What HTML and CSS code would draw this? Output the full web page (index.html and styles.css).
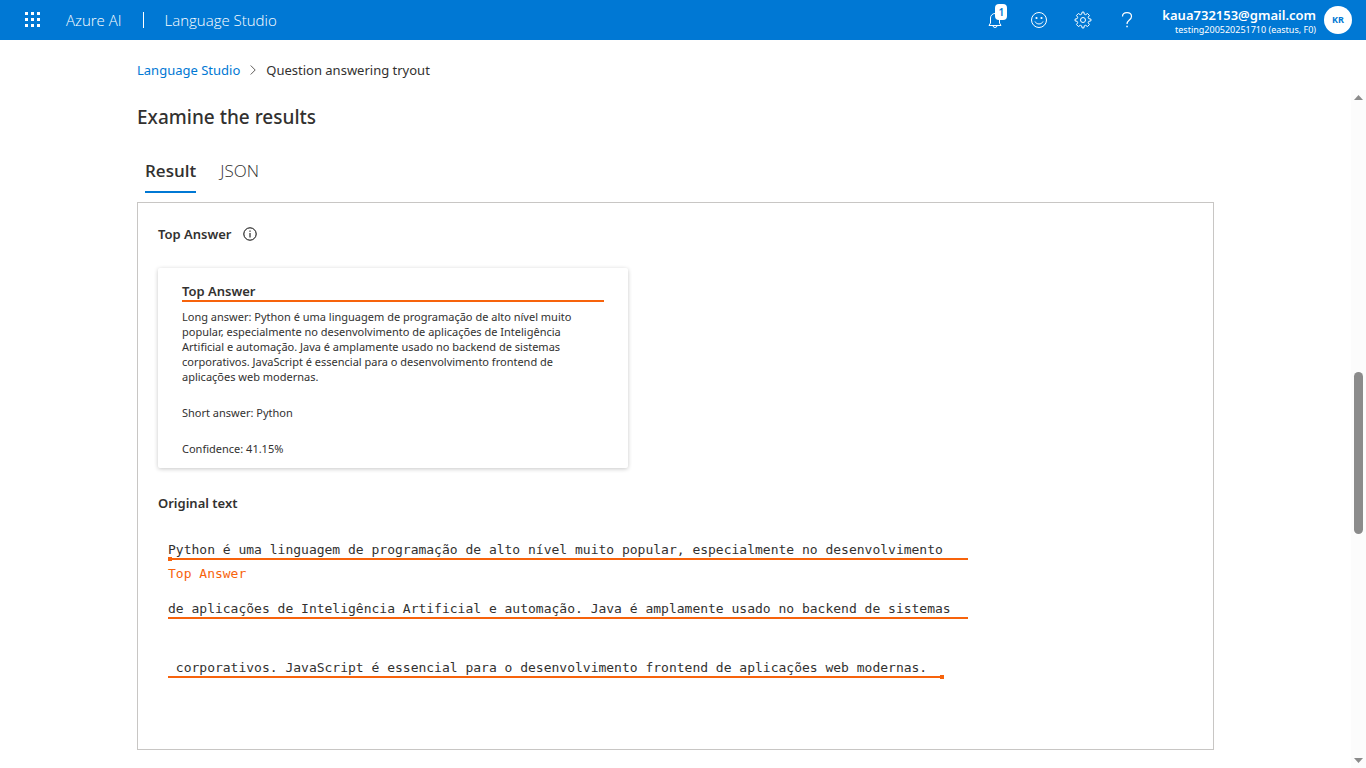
FILE: index.html
```html
<!DOCTYPE html>
<html lang="en">
<head>
<meta charset="utf-8">
<title>Question answering tryout - Language Studio</title>
<link rel="stylesheet" href="styles.css">
</head>
<body>
<header class="topbar">
  <button class="icon-btn waffle" aria-label="App launcher">
    <svg width="16" height="16" viewBox="0 0 16 16" fill="currentColor" shape-rendering="crispEdges"><path d="M0 0h3v3H0zM6 0h3v3H6zM12 0h3v3h-3zM0 6h3v3H0zM6 6h3v3H6zM12 6h3v3h-3zM0 12h3v3H0zM6 12h3v3H6zM12 12h3v3h-3z"/></svg>
  </button>
  <a class="brand" href="#">Azure AI</a>
  <span class="divider"></span>
  <a class="brand" href="#">Language Studio</a>
  <div class="tools">
    <button class="icon-btn" aria-label="Notifications">
      <svg width="16" height="18" viewBox="0 0 16 18" fill="none" stroke="currentColor"><path d="M3.500 12V7a4.500 4.500 0 0 1 9 0v5l1.500 2.500H2L3.500 12zM6 14.500a2 2 0 0 0 4 0"/></svg>
      <span class="badge">1</span>
    </button>
    <button class="icon-btn" aria-label="Feedback">
      <svg width="18" height="18" viewBox="0 0 18 18" fill="none" stroke="currentColor"><circle cx="9" cy="9" r="7.500"/><path d="M5 10.500c1.500 3.300 6.500 3.300 8 0"/><g fill="currentColor" stroke="none"><circle cx="6.500" cy="7" r="1.100"/><circle cx="11.500" cy="7" r="1.100"/></g></svg>
    </button>
    <button class="icon-btn" aria-label="Settings">
      <svg width="18" height="18" viewBox="0 0 18 18" fill="none" stroke="currentColor"><circle cx="9" cy="9" r="2.500"/><path stroke-linejoin="round" d="M8.200 1h1.600l.5 2.200 1.300.5 1.900-1.200 1.900 1.900-1.200 1.900.5 1.300 2.300.6v1.600l-2.300.6-.5 1.300 1.200 1.900-1.900 1.900-1.900-1.200-1.300.5-.5 2.200H8.200l-.6-2.200-1.300-.5-1.900 1.200-1.900-1.900 1.200-1.900-.5-1.300L1 9.800V8.200l2.200-.6.5-1.300-1.200-1.900 1.900-1.900 1.900 1.200 1.300-.5z"/></svg>
    </button>
    <button class="icon-btn" aria-label="Help">
      <svg width="18" height="18" viewBox="0 0 18 18" fill="none" stroke="currentColor"><path stroke-width="1.200" d="M4.500 5.500C4.500 3 6.500 1.600 9 1.600s4.500 1.500 4.500 3.900c0 3.500-4.500 3.700-4.500 7.500"/><path d="M8.300 15.500h1.500" stroke-width="1.500"/></svg>
    </button>
  </div>
  <div class="account">
    <span class="email">kaua732153@gmail.com</span>
    <span class="resource">testing200520251710 (eastus, F0)</span>
  </div>
  <button class="avatar" aria-label="Account">KR</button>
</header>

<nav class="breadcrumb" aria-label="Breadcrumb">
  <a href="#">Language Studio</a>
  <svg width="6" height="10" viewBox="0 0 6 10" fill="none" stroke="currentColor"><path d="M.7.5 5.200 5 .7 9.500"/></svg>
  <span>Question answering tryout</span>
</nav>

<div class="viewport">
  <main class="content">
    <h1>Examine the results</h1>
    <div class="tabs" role="tablist">
      <button class="tab selected" role="tab" aria-selected="true">Result</button>
      <button class="tab" role="tab" aria-selected="false">JSON</button>
    </div>
    <section class="panel" role="tabpanel">
      <h2 class="with-info">Top Answer
        <svg width="14" height="14" viewBox="0 0 14 14" fill="none" stroke="currentColor"><circle cx="7" cy="7" r="6.200"/><path d="M7 6v4.500M7 3.500v1.300"/></svg>
      </h2>
      <article class="card">
        <h3>Top Answer</h3>
        <p>Long answer: Python é uma linguagem de programação de alto nível muito<br>popular, especialmente no desenvolvimento de aplicações de Inteligência<br>Artificial e automação. Java é amplamente usado no backend de sistemas<br>corporativos. JavaScript é essencial para o desenvolvimento frontend de<br>aplicações web modernas.</p>
        <p>Short answer: Python</p>
        <p>Confidence: 41.15%</p>
      </article>
      <h2>Original text</h2>
      <div class="source">
        <div class="line"><span class="mark start">Python é uma linguagem de programação de alto nível muito popular, especialmente no desenvolvimento </span><span class="label">Top Answer</span></div>
        <div class="line"><span class="mark">de aplicações de Inteligência Artificial e automação. Java é amplamente usado no backend de sistemas</span></div>
        <div class="line"><span class="mark end"> corporativos. JavaScript é essencial para o desenvolvimento frontend de aplicações web modernas.</span></div>
      </div>
    </section>
  </main>
  <div class="scrollbar" aria-hidden="true">
    <svg width="9" height="5" viewBox="0 0 9 5"><path d="M0 5 4.500 0 9 5z"/></svg>
    <div class="track"><div class="thumb"></div></div>
    <svg width="9" height="5" viewBox="0 0 9 5"><path d="M0 0h9L4.500 5z"/></svg>
  </div>
</div>
</body>
</html>
```
FILE: styles.css
```css
* { box-sizing: border-box; }

body {
  margin: 0;
  min-height: 100vh;
  display: flex;
  flex-direction: column;
  background: #fff;
  color: #323130;
  font: 13px/20px "Noto Sans", "Open Sans", sans-serif;
}

h1, h2, h3, p { margin: 0; }
a { color: #0078d4; text-decoration: none; }
button { border: 0; padding: 0; background: none; font: inherit; color: inherit; }
svg { display: block; flex: none; }

.topbar {
  display: flex;
  align-items: center;
  height: 40px;
  padding-right: 14px;
  background: #0078d4;
  color: #fff;
}
.icon-btn {
  position: relative;
  display: flex;
  align-items: center;
  justify-content: center;
  width: 44px;
  height: 40px;
}
.waffle { width: 66px; }
.brand { color: #fff; font: 300 15px/20px "Open Sans", sans-serif; }
.divider { width: 1px; height: 16px; margin: 0 21px; background: #fff; }
.tools { display: flex; margin-left: auto; margin-right: 13px; }
.badge {
  position: absolute;
  top: 4px;
  left: 22px;
  width: 12px;
  height: 16px;
  border-radius: 4px;
  background: #fff;
  color: #0078d4;
  font-size: 10px;
  font-weight: 600;
  line-height: 16px;
}
.account { display: flex; flex-direction: column; align-items: flex-end; padding-top: 2px; margin-right: 8px; }
.email { font-size: 13px; font-weight: 600; line-height: 18px; }
.resource { font-size: 9px; line-height: 12px; }
.avatar {
  width: 28px;
  height: 28px;
  border-radius: 50%;
  background: #fff;
  color: #0078d4;
  font-size: 9px;
  font-weight: 700;
}

.breadcrumb {
  display: flex;
  align-items: center;
  gap: 10px;
  height: 50px;
  padding: 10px 137px 0;
}
.breadcrumb svg { color: #605e5c; }

.viewport { flex: 1; display: flex; }
.content { flex: 1; padding: 14px 137px 18px; }
h1 { font-size: 19px; font-weight: 500; line-height: 26px; }

.tabs { display: flex; padding-left: 8px; gap: 24px; margin: 20px 0 9px; }
.tab {
  height: 43px;
  border-bottom: 2px solid transparent;
  font: 300 17px/41px "Open Sans", sans-serif;
}
.tab.selected { border-color: #0078d4; font-weight: 600; }

.panel { min-height: 548px; padding: 21px 20px; border: 1px solid #c8c6c4; }
h2, h3 { font-size: 13px; font-weight: 600; line-height: 20px; }
.with-info { display: flex; align-items: center; gap: 11px; }
.with-info svg { color: #000; }

.card {
  max-width: 470px;
  margin: 24px 0 25px;
  padding: 13px 24px 12px;
  border-radius: 2px;
  box-shadow: 0 1px 4px rgba(0, 0, 0, .22);
}
.card h3 { height: 21px; margin-bottom: 7px; border-bottom: 2px solid #f7630c; }
.card p { font-size: 11px; line-height: 15px; }
.card p + p { margin-top: 21px; }

.source {
  padding: 29px 10px 0;
  font: 13px/16px "DejaVu Sans Mono", monospace;
}
.line { height: 59px; white-space: pre; }
.mark {
  position: relative;
  display: block;
  width: 800px;
  border-bottom: 2px solid #f7630c;
}
.end { width: 776px; }
.start::before, .end::after {
  content: "";
  position: absolute;
  bottom: -3px;
  width: 4px;
  height: 4px;
  background: #f7630c;
}
.start::before { left: 0; }
.end::after { right: 0; }
.label { display: block; margin-top: 6px; color: #f7630c; }

.scrollbar {
  display: flex;
  flex-direction: column;
  align-items: center;
  width: 15px;
  padding: 5px 0;
  background: #fcfcfc;
  fill: #8b8b8b;
}
.track { flex: 1; width: 9px; display: flex; flex-direction: column; }
.track::before { content: ""; flex: 272; }
.track::after { content: ""; flex: 224; }
.thumb { flex: 162; border-radius: 5px; background: #8b8b8b; }
```
